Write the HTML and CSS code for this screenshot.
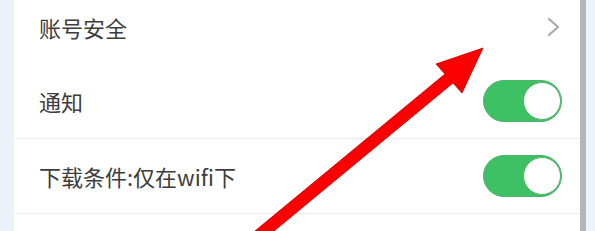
FILE: index.html
```html
<!DOCTYPE html>
<html lang="zh-CN">
<head>
<meta charset="utf-8">
<link rel="stylesheet" href="styles.css">
</head>
<body>
<div class="page">
  <div class="gutter-left"></div>
  <div class="panel">
    <div class="list">
      <div class="row">
        <span class="label">账号安全</span>
        <svg class="chevron" width="14" height="20" viewBox="0 0 14 20"><polyline points="2,2 11,10 2,18" fill="none" stroke="#a9a9a9" stroke-width="2.2" stroke-linecap="round" stroke-linejoin="round"/></svg>
      </div>
      <div class="row bordered">
        <span class="label">通知</span>
        <span class="toggle"><span class="knob"></span></span>
      </div>
      <div class="row bordered">
        <span class="label">下载条件:仅在wifi下</span>
        <span class="toggle"><span class="knob"></span></span>
      </div>
      <div class="row"></div>
    </div>
  </div>
  <div class="scrollbar"></div>
  <div class="gutter-right"></div>
</div>
<svg class="arrow" width="595" height="231" viewBox="0 0 595 231">
  <polygon points="483,48 462,93 453,83 245,255 238,245 445,74 436,64" fill="#fb0000" stroke="#c40000" stroke-width="0.8" stroke-linejoin="miter"/>
</svg>
</body>
</html>
```
FILE: styles.css
```css
html, body {
  margin: 0;
  padding: 0;
  width: 595px;
  height: 231px;
  overflow: hidden;
  background: #eef2fa;
  font-family: "Noto Sans CJK SC", "Noto Sans", sans-serif;
}
.page {
  display: flex;
  height: 231px;
}
.gutter-left {
  width: 14px;
  flex: none;
  background: #edf1f9;
}
.panel {
  width: 566px;
  flex: none;
  background: #ffffff;
  overflow: hidden;
}
.scrollbar {
  width: 6px;
  flex: none;
  background: #b5b5b5;
}
.gutter-right {
  flex: 1;
  background: #eef2fa;
}
.list {
  margin-top: -11px;
}
.row {
  height: 75px;
  box-sizing: border-box;
  display: flex;
  align-items: center;
  justify-content: space-between;
  padding: 0 18px 0 25px;
}
.bordered {
  border-bottom: 1px solid #ececec;
}
.label {
  font-size: 22px;
  color: #3d3d3d;
  letter-spacing: 0;
}
.chevron {
  margin-right: 1px;
}
.toggle {
  width: 79px;
  height: 42px;
  box-sizing: border-box;
  border-radius: 21px;
  background: #3ec164;
  border: 1.5px solid #4fb46b;
  display: flex;
  justify-content: flex-end;
  align-items: center;
}
.knob {
  width: 38px;
  height: 38px;
  border-radius: 50%;
  background: #ffffff;
  box-sizing: border-box;
  border: 1px solid #57b472;
  margin-right: 0.5px;
}
.arrow {
  position: absolute;
  left: 0;
  top: 0;
}
```
